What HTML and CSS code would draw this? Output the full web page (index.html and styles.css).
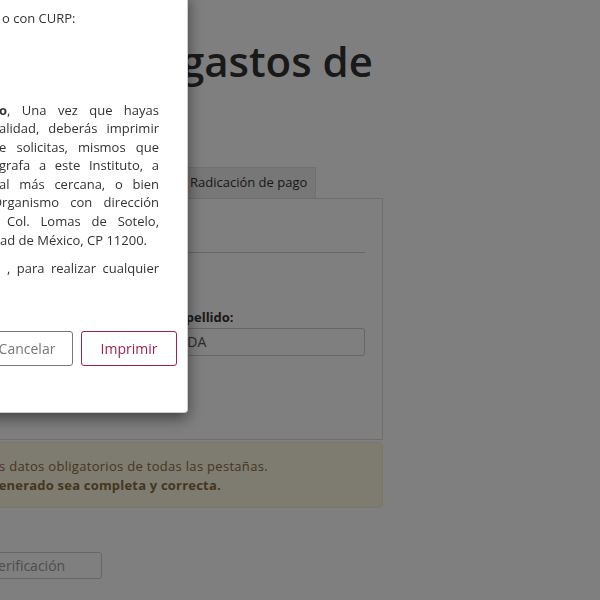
FILE: index.html
```html
<!DOCTYPE html>
<html lang="es">
<head>
<meta charset="utf-8">
<title>Reembolso de gastos</title>
<link rel="stylesheet" href="styles.css">
</head>
<body>
<div class="page">
  <h1 class="title">Solicitud de pago de gastos de</h1>
  <div class="tabs">
    <div class="tab">Datos del fallecido</div>
    <div class="tab">Datos del solicitante</div>
    <div class="tab tab-active">Radicación de pago</div>
  </div>
  <div class="panel">
    <div class="section-title">Datos</div>
    <div class="fields">
      <div class="field">
        <label class="lbl">Nombre(s):</label>
        <div class="input">MARIA</div>
      </div>
      <div class="field">
        <label class="lbl">Primer apellido:</label>
        <div class="input">LOPEZ</div>
      </div>
      <div class="field">
        <label class="lbl">Segundo apellido:</label>
        <div class="input">CASTAÑEDA</div>
      </div>
    </div>
  </div>
  <div class="alert">
    <div class="alert-first">Es indispensable capturar y guardar los datos obligatorios de todas las pestañas.</div>
    <div class="alert-strong">Verifique que la solicitud que ha generado sea completa y correcta.</div>
  </div>
  <div class="verify">
    <div class="verify-input">Código de verificación</div>
  </div>
</div>

<div class="backdrop"></div>

<div class="modal">
  <div class="modal-body">
    <div class="ln"><span class="pre">2. Ingresa el número de folio generad</span><span class="vis vis-left">o con CURP:</span></div>
    <div class="para">
      <div class="ln"><span class="pre">3. Descarga e imprime el <b>Formato de Solicitud de Pag</b></span><span class="vis"><b>o</b>, Una vez que hayas</span></div>
      <div class="ln"><span class="pre">concluido el llenado de la solicitud en su tot</span><span class="vis">alidad, deberás imprimir</span></div>
      <div class="ln"><span class="pre">el formato y los documentos del trámite qu</span><span class="vis">e solicitas, mismos que</span></div>
      <div class="ln"><span class="pre">deberás entregar en original y con firma autó</span><span class="vis">grafa a este Instituto, a</span></div>
      <div class="ln"><span class="pre">través de la Oficina de Representación Estat</span><span class="vis">al más cercana, o bien</span></div>
      <div class="ln"><span class="pre">en la Oficialía de Partes de este </span><span class="vis vis-cut">Organismo con dirección</span></div>
      <div class="ln"><span class="pre">en Boulevard Manuel Ávila Camacho No. 1000,</span><span class="vis vis-ind">Col. Lomas de Sotelo,</span></div>
      <div class="ln"><span class="pre">Alcaldía Miguel Hidalgo, Ciud</span><span class="vis vis-left vis-l1">ad de México, CP 11200.</span></div>
    </div>
    <div class="para">
      <div class="ln"><span class="pre">Puedes comunicarte al 55 5062 0555, extensión 10234</span><span class="vis vis-ind2">, para realizar cualquier</span></div>
      <div class="ln"><span class="pre">aclaración.</span><span class="vis vis-left"></span></div>
    </div>
  </div>
  <div class="modal-footer">
    <button class="btn btn-cancel" type="button">Cancelar</button>
    <button class="btn btn-print" type="button">Imprimir</button>
  </div>
</div>
</body>
</html>
```
FILE: styles.css
```css
html, body {
  margin: 0;
  padding: 0;
  background: #ffffff;
}
body {
  font-family: "Open Sans", "DejaVu Sans", sans-serif;
  color: #333333;
  font-size: 13px;
  line-height: 1.42857;
  overflow: hidden;
  height: 600px;
}

/* ---------- page behind the modal ---------- */
.page {
  margin-left: -237px;
  width: 620px;
  padding-top: 38px;
}
.title {
  margin: 0 11px 0 0;
  font-size: 42px;
  line-height: 1.1;
  font-weight: 600;
  color: #333333;
  text-align: right;
  white-space: nowrap;
}
.tabs {
  display: flex;
  margin-top: 83px;
}
.tab {
  flex: 0 0 209px;
  box-sizing: border-box;
  height: 31px;
  padding: 0 10px;
  line-height: 29px;
  color: #555;
  white-space: nowrap;
  overflow: hidden;
}
.tab-active {
  flex: 0 0 135px;
  background: #eeeeee;
  border: 1px solid #e3e3e3;
  border-bottom: none;
  color: #333;
  padding: 0 8px;
  overflow: visible;
}
.panel {
  border: 1px solid #dddddd;
  height: 242px;
  box-sizing: border-box;
  padding: 18px 17px 0 18px;
}
.section-title {
  border-bottom: 1px solid #cccccc;
  height: 36px;
  box-sizing: border-box;
  color: #333;
  font-size: 15px;
}
.fields {
  display: grid;
  grid-template-columns: 1fr 1fr 246px;
  gap: 16px;
  margin-top: 55px;
}
.field {
  display: flex;
  flex-direction: column;
}
.lbl {
  font-weight: 700;
  color: #333;
  line-height: 18px;
  margin-bottom: 2px;
  white-space: nowrap;
}
.input {
  height: 28px;
  box-sizing: border-box;
  border: 1px solid #cccccc;
  border-radius: 3px;
  padding: 3px 7px;
  color: #555555;
  font-size: 14px;
  line-height: 20px;
}
.alert {
  margin-top: 2px;
  background: #fcf8e3;
  border: 1px solid #faebcc;
  border-radius: 4px;
  color: #8a6d3b;
  padding: 14px 15px;
  height: 66px;
  box-sizing: border-box;
  white-space: nowrap;
}
.alert-first {
  letter-spacing: 0.3px;
  text-indent: -23px;
}
.alert-strong {
  font-weight: 700;
  letter-spacing: 0.2px;
  text-indent: -7px;
}
.verify {
  margin-top: 44px;
  padding-left: 139px;
}
.verify-input {
  width: 200px;
  height: 27px;
  box-sizing: border-box;
  border: 1px solid #cccccc;
  border-radius: 3px;
  padding: 3px 12px 3px 19px;
  color: #999999;
  font-size: 14px;
  line-height: 19px;
  white-space: nowrap;
}

/* ---------- backdrop + modal ---------- */
.backdrop {
  position: fixed;
  inset: 0;
  background: rgba(0, 0, 0, 0.5);
}
.modal {
  position: fixed;
  left: -312px;
  top: -7px;
  width: 500px;
  box-sizing: border-box;
  background: #ffffff;
  border: 1px solid rgba(0, 0, 0, 0.2);
  border-radius: 4px;
  box-shadow: 0 5px 15px rgba(0, 0, 0, 0.5);
  color: #333333;
}
.modal-body {
  padding: 15px 28px 15px 15px;
}
.para {
  margin-top: 73px;
  margin-bottom: 10px;
}
.para + .para {
  margin-top: 0;
}
.ln {
  display: flex;
  justify-content: flex-end;
  white-space: nowrap;
  line-height: 18.57px;
}
.pre {
  flex: none;
}
.vis {
  flex: none;
  box-sizing: border-box;
  width: 160px;
  white-space: normal;
  text-align: justify;
  text-align-last: justify;
}
.vis-left {
  padding-left: 3px;
  text-align: left;
  text-align-last: left;
}
.vis-l1 {
  padding-left: 1px;
}
.vis-cut {
  width: 167px;
}
.vis-ind {
  padding-left: 8px;
}
.vis-ind2 {
  padding-left: 8px;
}
.modal-footer {
  display: flex;
  justify-content: flex-end;
  gap: 8px;
  padding: 10px 10px 46px 15px;
}
.btn {
  height: 35px;
  box-sizing: border-box;
  background: #ffffff;
  font-family: "Open Sans", "DejaVu Sans", sans-serif;
  font-size: 14px;
  border-radius: 3px;
  padding: 0;
  cursor: pointer;
}
.btn-cancel {
  border: 1px solid #777777;
  color: #777777;
  width: 92px;
}
.btn-print {
  border: 1px solid #9d2449;
  color: #9d2449;
  width: 96px;
}
```
